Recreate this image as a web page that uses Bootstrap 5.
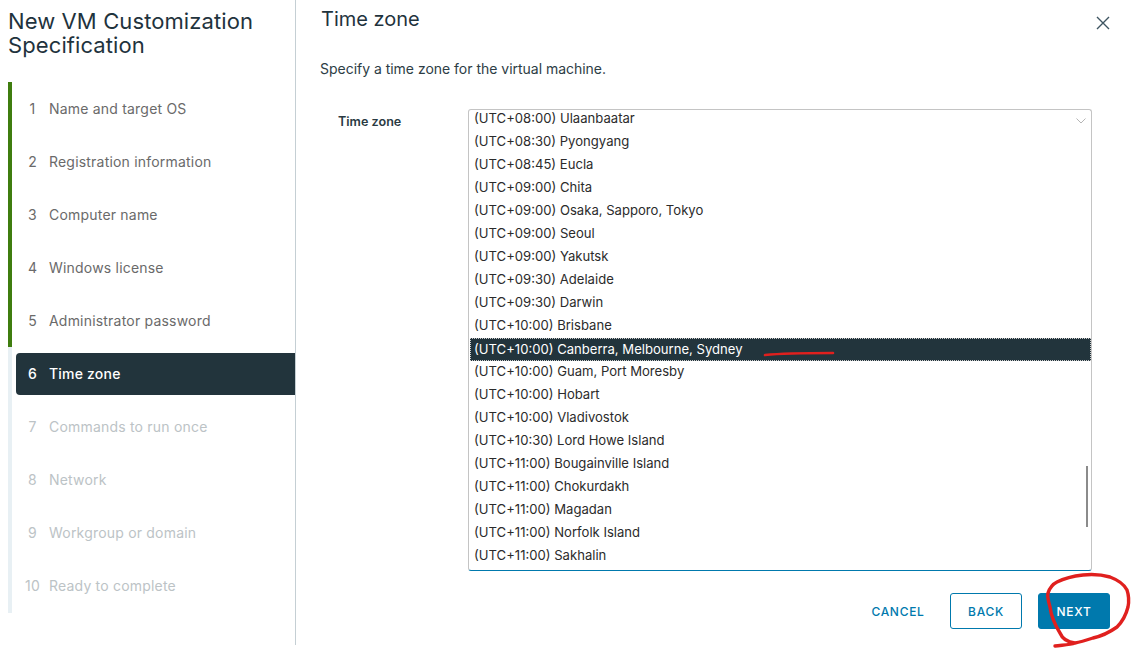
<!DOCTYPE html>
<html lang="en"><head><meta charset="utf-8"><title>New VM Customization Specification</title>
<link rel="stylesheet" href="https://cdn.jsdelivr.net/npm/bootstrap@5.3.0/dist/css/bootstrap.min.css">
<style>
html,body{height:649px;overflow:hidden;background:#fff;font-family:Inter,"Liberation Sans",sans-serif;color:#1f333d}
.shell{position:relative;width:1132px;height:649px}
.side{width:296px;height:645px;border-right:1px solid #c5cfd4;flex:none}
.wiz-title{font-size:22px;line-height:24px;font-weight:400;color:#1f333d;margin:0;padding:9px 0 0 8px;letter-spacing:.1px;height:82px}
.steps{margin:0 0 0 8px;padding:0;list-style:none}
.step{height:53px;display:flex;align-items:flex-start;border-left:4px solid #e8f0f4;padding-left:4px;font-size:14px;letter-spacing:.2px;color:#6a6a6a}
.step:last-child{height:54px}
.step.done{border-left-color:#3f7d0f}
.step .lbl{height:42px;margin-top:6px;padding-bottom:2px;flex:1;display:flex;align-items:center;border-radius:4px 0 0 4px}
.step .num{width:33px;text-align:center;flex:none}
.step.cur .lbl{background:#22343c;color:#fff;font-weight:500}
.step.todo{color:#bcc3c6}
.main{flex:1;min-width:0;padding:0 22px 0 24px;position:relative}
.main h2{font-size:20px;font-weight:400;line-height:24px;margin:7px 0 0 1px;color:#1f333d}
.close-x{position:absolute;right:22px;top:16px;width:14px;height:14px;display:block}
.intro{font-size:14px;letter-spacing:-.02px;color:#2d3d45;margin:28px 0 0 0;line-height:20px;height:20px}
.frow{display:flex;margin-top:30px}
.flbl{width:148px;font-size:12.6px;font-weight:600;padding:4px 0 0 18px;color:#2a3a42;flex:none}
.tzbox{position:relative;width:624px;height:462px;border:1px solid #c4c4c4;border-bottom-color:#0079ad;border-radius:3px;overflow:hidden;background:#fff}
.tzbox ul{list-style:none;margin:-2px 0 0;padding:0;font-size:13.1px;color:#2b2b2b}
.tzbox li{height:23px;line-height:21px;padding:0 0 0 5px}
.tzbox li.sel{background:#22343c;color:#fff;outline:1px dotted #ccc;outline-offset:-1px;line-height:23px;padding-left:4px;margin:0 0 0 1px}
.chev{position:absolute;right:5px;top:8px;width:10px;height:6px}
.thumb{position:absolute;right:3px;top:356px;width:2px;height:61px;background:#8b8b8b}
.foot{display:flex;justify-content:flex-end;align-items:center;margin-top:22px}
.foot .btn{font-size:12px;font-weight:500;letter-spacing:.7px;height:36px;border-radius:3px;padding:1px 0 0;width:72px;display:flex;align-items:center;justify-content:center}
.foot .b-link{color:#0079ad;background:none;border:0;margin-right:16px}
.foot .b-out{color:#0079ad;border:1px solid #0079ad;background:#fff;margin-right:16px}
.foot .b-pri{color:#fff;background:#0079ad;border:1px solid #0079ad}
.ink{position:absolute;left:0;top:0;pointer-events:none}
</style></head>
<body>
<div class="shell d-flex align-items-start">
<aside class="side">
<h1 class="wiz-title">New VM Customization<br>Specification</h1>
<ol class="steps">
<li class="step done"><span class="lbl"><span class="num">1</span>Name and target OS</span></li>
<li class="step done"><span class="lbl"><span class="num">2</span>Registration information</span></li>
<li class="step done"><span class="lbl"><span class="num">3</span>Computer name</span></li>
<li class="step done"><span class="lbl"><span class="num">4</span>Windows license</span></li>
<li class="step done"><span class="lbl"><span class="num">5</span>Administrator password</span></li>
<li class="step cur"><span class="lbl"><span class="num">6</span>Time zone</span></li>
<li class="step todo"><span class="lbl"><span class="num">7</span>Commands to run once</span></li>
<li class="step todo"><span class="lbl"><span class="num">8</span>Network</span></li>
<li class="step todo"><span class="lbl"><span class="num">9</span>Workgroup or domain</span></li>
<li class="step todo"><span class="lbl"><span class="num">10</span>Ready to complete</span></li>
</ol>
</aside>
<main class="main">
<h2>Time zone</h2>
<svg class="close-x" viewBox="0 0 14 14" aria-label="Close"><path d="M1 1L13 13M13 1L1 13" stroke="#3e5561" stroke-width="1.4" fill="none"/></svg>
<p class="intro">Specify a time zone for the virtual machine.</p>
<div class="frow">
<div class="flbl">Time zone</div>
<div class="tzbox">
<ul>
<li>(UTC+08:00) Ulaanbaatar</li>
<li>(UTC+08:30) Pyongyang</li>
<li>(UTC+08:45) Eucla</li>
<li>(UTC+09:00) Chita</li>
<li>(UTC+09:00) Osaka, Sapporo, Tokyo</li>
<li>(UTC+09:00) Seoul</li>
<li>(UTC+09:00) Yakutsk</li>
<li>(UTC+09:30) Adelaide</li>
<li>(UTC+09:30) Darwin</li>
<li>(UTC+10:00) Brisbane</li>
<li class="sel">(UTC+10:00) Canberra, Melbourne, Sydney</li>
<li>(UTC+10:00) Guam, Port Moresby</li>
<li>(UTC+10:00) Hobart</li>
<li>(UTC+10:00) Vladivostok</li>
<li>(UTC+10:30) Lord Howe Island</li>
<li>(UTC+11:00) Bougainville Island</li>
<li>(UTC+11:00) Chokurdakh</li>
<li>(UTC+11:00) Magadan</li>
<li>(UTC+11:00) Norfolk Island</li>
<li>(UTC+11:00) Sakhalin</li>
</ul>
<svg class="chev" viewBox="0 0 10 6"><path d="M.5.5L5 5L9.500.5" stroke="#b5b5b5" fill="none"/></svg>
<div class="thumb"></div>
</div>
</div>
<div class="foot">
<button class="btn b-link">CANCEL</button>
<button class="btn b-out">BACK</button>
<button class="btn b-pri">NEXT</button>
</div>
</main>
<svg class="ink" width="1132" height="649" viewBox="0 0 1132 649">
<path d="M765 355C785 353 810 353 833 353" stroke="#e0201e" stroke-width="2.6" fill="none" stroke-linecap="round"/>
<path d="M1055 646C1062 645 1070 645 1075 643C1067 642 1062 638 1060 633C1055 625 1051 615 1050 607C1048 600 1047 596 1048 593C1050 587 1053 584 1057 582C1065 578 1074 576 1083 575C1093 574 1103 575 1110 577C1118 580 1124 584 1127 590C1129 596 1129 602 1128 607C1126 615 1122 622 1117 627C1110 632 1102 636 1093 638C1087 640 1081 642 1075 643" stroke="#e0201e" stroke-width="3.4" fill="none" stroke-linecap="round" stroke-linejoin="round"/>
</svg>
</div>
</body></html>
